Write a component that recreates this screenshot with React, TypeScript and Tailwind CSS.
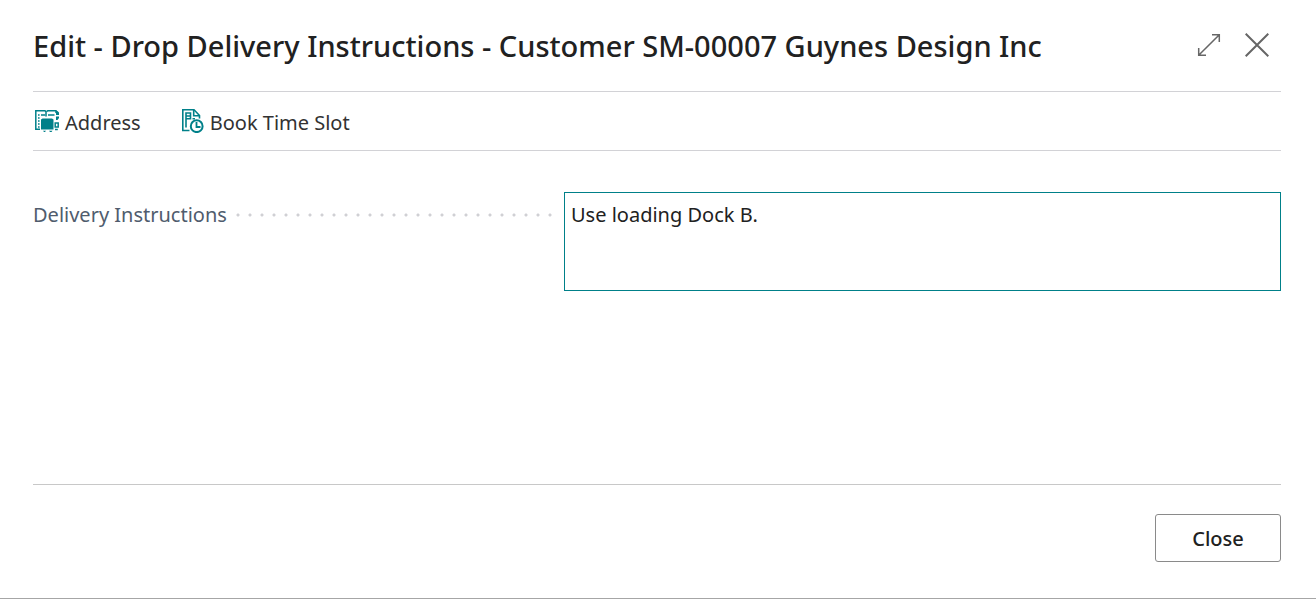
import { useState } from 'react';
import type { ReactNode } from 'react';

function AddressIcon() {
  return (
    <svg className="w-6 h-6 shrink-0" viewBox="0 0 24 24" fill="none" aria-hidden="true">
      <g stroke="#008089" strokeWidth="1.5">
        <path d="M5 20.3H.8V1.7H10L11 2.7V7.5" />
        <path d="M11.5 2.7L12.8 1.7H21V4" />
        <path d="M6 6H10M13 6H19.5" />
        <path d="M3 6H4.6M3 9H4.6M3 12H4.6M3 15H4.6M3 18H4.6" />
        <rect x="20.2" y="14" width="3" height="4" />
        <path d="M20 20.5H22.8" />
      </g>
      <g fill="#008089">
        <path d="M6 10.5L7.5 9.5H17L18.5 10.5V20.5H6Z" />
        <path d="M21 2H22.5L24 3.5V6H21ZM21 7.5H24V9L22.5 11H21Z" />
        <path d="M8 21.7H11L10 23H9ZM14 21.7H17.5L16.5 23H15Z" />
      </g>
    </svg>
  );
}

function BookTimeSlotIcon() {
  return (
    <svg className="w-[22px] h-6 shrink-0" viewBox="0 0 22 24" fill="none" aria-hidden="true">
      <g stroke="#008089" strokeWidth="1.6">
        <path d="M7.5 21.5H.8V.8H12L17.5 6.5V9.5" />
        <path d="M11.7 1V6.7H17.5" />
        <path d="M4 18.5V4H8.5V9.8H4M4 7H8.5M10.5 9.8H13" />
        <circle cx="14.7" cy="17.2" r="5.9" strokeWidth="2" />
        <path d="M14.5 13V18H18.5" strokeWidth="1.8" />
      </g>
    </svg>
  );
}

interface ActionButtonProps {
  icon: ReactNode;
  label: string;
}

function ActionButton({ icon, label }: ActionButtonProps) {
  return (
    <button type="button" className="flex items-center gap-1.5 text-[#323232]">
      {icon}
      <span className="pt-1">{label}</span>
    </button>
  );
}

export default function App() {
  const [instructions, setInstructions] = useState('Use loading Dock B.');

  return (
    <div
      role="dialog"
      aria-labelledby="dialog-title"
      className="flex min-h-screen flex-col border-b border-[#a6a6a6] bg-white pl-[33px] pr-[35px] font-['Noto_Sans','Segoe_UI',sans-serif] text-xl text-[#212121]"
    >
      <header className="flex h-[92px] items-center justify-between border-b border-[#d2d2d6]">
        <h1 id="dialog-title" className="text-[29px] leading-10 font-medium">
          Edit - Drop Delivery Instructions - Customer SM-00007 Guynes Design Inc
        </h1>
        <div className="flex items-center gap-6 pr-3 pb-0.5 text-[#666]">
          <button type="button" aria-label="Expand">
            <svg className="w-6 h-6" viewBox="0 0 24 24" fill="none" stroke="currentColor" strokeWidth="1.5">
              <path d="M1.7 22.3L22.3 1.7M15 1.7H22.3V9M1.7 15V22.3H9" />
            </svg>
          </button>
          <button type="button" aria-label="Close dialog">
            <svg className="w-6 h-6" viewBox="0 0 24 24" fill="none" stroke="currentColor" strokeWidth="2">
              <path d="M.7.7L23.3 23.3M23.3.7L.7 23.3" />
            </svg>
          </button>
        </div>
      </header>

      <nav className="flex h-[59px] items-center gap-[41px] border-b border-[#d2d2d6] pl-0.5">
        <ActionButton icon={<AddressIcon />} label="Address" />
        <ActionButton icon={<BookTimeSlotIcon />} label="Book Time Slot" />
      </nav>

      <main className="grid flex-1 grid-cols-[531fr_717fr] items-start pt-[41px]">
        <div className="flex items-center pt-[9px] pr-2">
          <label htmlFor="instructions" className="leading-7 text-[#505c6d]">
            Delivery Instructions
          </label>
          <span className="ml-[5px] h-3 flex-1 bg-[radial-gradient(circle,#d0d0d4_1px,transparent_2px)] bg-size-[12px_12px] bg-repeat-x" />
        </div>
        <textarea
          id="instructions"
          rows={3}
          value={instructions}
          onChange={(e) => setInstructions(e.target.value)}
          className="block h-[99px] w-full resize-none border border-[#008089] px-1.5 py-2 leading-7 outline-none"
        />
      </main>

      <footer className="flex justify-end border-t border-[#c8c8c8] pt-[29px] pb-9">
        <button
          type="button"
          className="h-12 w-[126px] rounded-[3px] border border-[#8a8a8a] pt-0.5 font-medium"
        >
          Close
        </button>
      </footer>
    </div>
  );
}
